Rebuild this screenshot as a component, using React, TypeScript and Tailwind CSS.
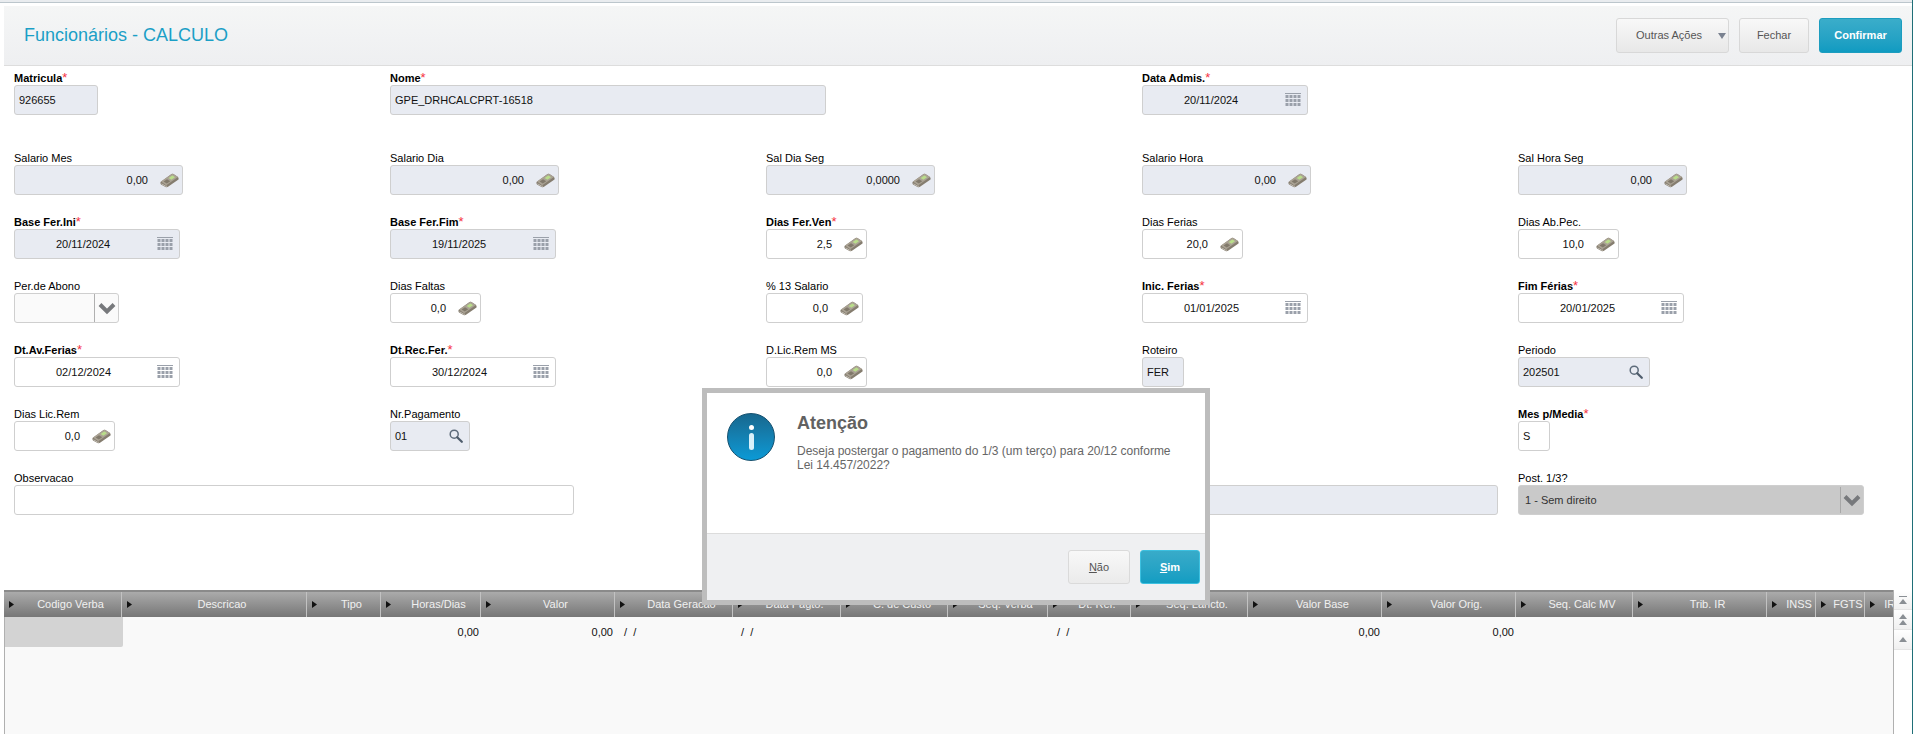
import type { ReactNode } from 'react';

function MoneyIcon() {
  return (
    <svg width="19" height="15" viewBox="0 0 19 15" className="shrink-0">
      <path d="M0.5 9 L11.5 1 Q12.5 0.4 13.5 1 L18 4 Q19 5 18.5 6.5 L8 13.8 Q7 14.6 5.5 14 L1 11.5 Q0.2 10.5 0.5 9 Z" fill="#857d6f" />
      <path d="M1 8.6 L11.8 1 Q12.6 0.6 13.4 1.1 L18 4 L7 11.8 Q6.2 12.2 5.4 11.8 Z" fill="#aaa294" />
      <path d="M8.6 5 L11.8 2.8 Q12.4 2.4 13 2.8 L15 4.2 L11.4 6.7 Z" fill="#b9dd8a" />
      <path d="M3.6 8.4 L7 6.2 L10.2 8.2 L6.8 10.5 Z" fill="#81796b" />
      <path d="M1.5 10.8 L5.8 13.2 L7 13.2" fill="none" stroke="#d2cec4" strokeWidth="0.8" />
    </svg>
  );
}

function CalendarIcon() {
  const cells = [0, 1, 2, 3];
  return (
    <svg width="16" height="14" viewBox="0 0 16 14" className="shrink-0" fill="#9aa0aa">
      <rect x="0" y="0" width="16" height="1" />
      {[2, 6, 10].map(y =>
        cells.map(c => <rect key={`${y}-${c}`} x={c * 4 + 0.5} y={y} width="3" height="3" />)
      )}
    </svg>
  );
}

function SearchIcon() {
  return (
    <svg width="14" height="14" viewBox="0 0 14 14" fill="none" className="shrink-0">
      <circle cx="5.2" cy="5.2" r="4" stroke="#5d6b7a" strokeWidth="1.5" />
      <path d="M8.2 8.2 L12.8 12.8" stroke="#4e5c6b" strokeWidth="2.2" strokeLinecap="round" />
    </svg>
  );
}

function ChevronIcon() {
  return (
    <svg width="18" height="13" viewBox="0 0 18 13" fill="none">
      <path d="M2 2.5 L9 9.5 L16 2.5" stroke="#77797c" strokeWidth="4" />
    </svg>
  );
}

function Field({ label, required, box, children }: { label: string; required?: boolean; box: string; children: ReactNode }) {
  return (
    <div className="flex flex-col">
      <div className={`h-[15px] text-[11px] leading-[17px] whitespace-nowrap text-black ${required ? 'font-bold' : ''}`}>
        {label}
        {required && <span className="text-[13px] leading-[13px] font-normal text-[#f5323f]">*</span>}
      </div>
      <div className={`flex h-[30px] items-center rounded-[3px] border border-[#cfcfcf] text-[11px] text-[#111] ${box}`}>
        {children}
      </div>
    </div>
  );
}

const locked = 'bg-[#e8ebf2]';
const free = 'bg-white';

function Money({ label, value, w, bg, required }: { label: string; value: string; w: string; bg: string; required?: boolean }) {
  return (
    <Field label={label} required={required} box={`${w} ${bg} pr-[3px]`}>
      <span className="flex-1 pr-[12px] text-right">{value}</span>
      <MoneyIcon />
    </Field>
  );
}

function DateField({ label, value, bg, required }: { label: string; value: string; bg: string; required?: boolean }) {
  return (
    <Field label={label} required={required} box={`w-[166px] ${bg} pr-[6px]`}>
      <span className="flex-1 pl-[41px]">{value}</span>
      <CalendarIcon />
    </Field>
  );
}

function Lookup({ label, value, w }: { label: string; value: string; w: string }) {
  return (
    <Field label={label} box={`${w} ${locked} pl-[4px] pr-[6px]`}>
      <span className="flex-1">{value}</span>
      <SearchIcon />
    </Field>
  );
}

function Text({ label, value, w, bg, required }: { label: string; value?: string; w: string; bg: string; required?: boolean }) {
  return (
    <Field label={label} required={required} box={`${w} ${bg} pl-[4px]`}>
      {value}
    </Field>
  );
}

const rowClass = 'grid h-[45px] grid-cols-[376px_376px_376px_376px_1fr]';

function Form() {
  return (
    <div className="flex flex-col gap-[19px] pl-[10px] pt-[4px]">
      <div className={`${rowClass} mb-[16px]`}>
        <Text label="Matricula" required value="926655" w="w-[84px]" bg={locked} />
        <Text label="Nome" required value="GPE_DRHCALCPRT-16518" w="w-[436px]" bg={locked} />
        <div className="col-start-4">
          <DateField label="Data Admis." required value="20/11/2024" bg={locked} />
        </div>
      </div>

      <div className={rowClass}>
        <Money label="Salario Mes" value="0,00" w="w-[169px]" bg={locked} />
        <Money label="Salario Dia" value="0,00" w="w-[169px]" bg={locked} />
        <Money label="Sal Dia Seg" value="0,0000" w="w-[169px]" bg={locked} />
        <Money label="Salario Hora" value="0,00" w="w-[169px]" bg={locked} />
        <Money label="Sal Hora Seg" value="0,00" w="w-[169px]" bg={locked} />
      </div>

      <div className={rowClass}>
        <DateField label="Base Fer.Ini" required value="20/11/2024" bg={locked} />
        <DateField label="Base Fer.Fim" required value="19/11/2025" bg={locked} />
        <Money label="Dias Fer.Ven" required value="2,5" w="w-[101px]" bg={free} />
        <Money label="Dias Ferias" value="20,0" w="w-[101px]" bg={free} />
        <Money label="Dias Ab.Pec." value="10,0" w="w-[101px]" bg={free} />
      </div>

      <div className={rowClass}>
        <Field label="Per.de Abono" box="w-[105px] border-[#8e8e8e] bg-[#fafafa]">
          <span className="flex-1" />
          <span className="flex h-full w-[24px] items-center justify-center border-l border-[#b0b0b0]">
            <ChevronIcon />
          </span>
        </Field>
        <Money label="Dias Faltas" value="0,0" w="w-[91px]" bg={free} />
        <Money label="% 13 Salario" value="0,0" w="w-[97px]" bg={free} />
        <DateField label="Inic. Ferias" required value="01/01/2025" bg={free} />
        <DateField label="Fim Férias" required value="20/01/2025" bg={free} />
      </div>

      <div className={rowClass}>
        <DateField label="Dt.Av.Ferias" required value="02/12/2024" bg={free} />
        <DateField label="Dt.Rec.Fer." required value="30/12/2024" bg={free} />
        <Money label="D.Lic.Rem MS" value="0,0" w="w-[101px]" bg={free} />
        <Text label="Roteiro" value="FER" w="w-[42px]" bg={locked} />
        <Lookup label="Periodo" value="202501" w="w-[132px]" />
      </div>

      <div className={rowClass}>
        <Money label="Dias Lic.Rem" value="0,0" w="w-[101px]" bg={free} />
        <Lookup label="Nr.Pagamento" value="01" w="w-[80px]" />
        <div className="col-start-5">
          <Text label="Mes p/Media" required value="S" w="w-[32px]" bg={free} />
        </div>
      </div>

      <div className={rowClass}>
        <div className="col-span-2">
          <Text label="Observacao" w="w-[560px]" bg={free} />
        </div>
        <div className="col-span-2">
          <Text label="" w="w-[732px]" bg={locked} />
        </div>
        <Field label="Post. 1/3?" box="w-[346px] border-[#8e8e8e] bg-[#c9c9c9]">
          <span className="flex-1 pl-[6px] text-[#333]">1 - Sem direito</span>
          <span className="flex h-[26px] w-[23px] items-center justify-center border-l border-[#a8a8a8]">
            <ChevronIcon />
          </span>
        </Field>
      </div>
    </div>
  );
}

const columns = [
  'Codigo Verba', 'Descricao', 'Tipo', 'Horas/Dias', 'Valor', 'Data Geracao', 'Data Pagto.', 'C. de Custo', 'Seq. Verba',
  'Dt. Ref.', 'Seq. Lancto.', 'Valor Base', 'Valor Orig.', 'Seq. Calc MV', 'Trib. IR', 'INSS', 'FGTS', 'IRRF',
];

const gridCols = 'grid-cols-[118px_185px_74px_100px_134px_118px_108px_107px_100px_83px_117px_134px_134px_117px_134px_49px_49px_49px]';

function ScrollButton({ count, line }: { count: number; line?: boolean }) {
  return (
    <div className="flex h-[20px] flex-col items-center justify-center gap-[1px] border-b border-[#e4e4e4] bg-gradient-to-b from-white to-[#f0f0f0]">
      {line && <div className="mb-[1px] h-[1px] w-[8px] bg-[#8a8f94]" />}
      {Array.from({ length: count }).map((_, i) => (
        <svg key={i} width="8" height="5" viewBox="0 0 8 5">
          <path d="M4 0 L8 5 L0 5 Z" fill="#8a8f94" />
        </svg>
      ))}
    </div>
  );
}

const slashes = '/  /';

function Table() {
  return (
    <div className="mt-[75px] flex h-[144px]">
      <div className="w-[1889px] overflow-hidden">
        <div className={`grid h-[27px] border-t-2 border-[#8a8a8a] bg-gradient-to-b from-[#ababab] to-[#777777] ${gridCols}`}>
          {columns.map(c => (
            <div key={c} className="flex items-center overflow-hidden border-r border-[#c2c2c2] pl-[5px]">
              <svg width="5" height="7" viewBox="0 0 5 7" className="mr-[6px] shrink-0">
                <path d="M0 0 L5 3.5 L0 7 Z" fill="#111" />
              </svg>
              <span className="flex-1 whitespace-nowrap text-center text-[11px] text-[#f0f0f0]">{c}</span>
            </div>
          ))}
        </div>
        <div className="h-[117px] border-l border-[#b0b0b0] bg-[#f9f9f9]">
          <div className={`grid h-[30px] items-center text-[11px] text-[#111] ${gridCols}`}>
            <div className="h-full rounded-br-[2px] bg-[#d3d3d3]" />
            <div />
            <div />
            <div className="pr-[3px] text-right">0,00</div>
            <div className="pr-[3px] text-right">0,00</div>
            <div className="pl-[8px] whitespace-pre">{slashes}</div>
            <div className="pl-[7px] whitespace-pre">{slashes}</div>
            <div />
            <div />
            <div className="pl-[8px] whitespace-pre">{slashes}</div>
            <div />
            <div className="pr-[3px] text-right">0,00</div>
            <div className="pr-[3px] text-right">0,00</div>
          </div>
        </div>
      </div>
      <div className="w-[19px] border-l border-[#b0b0b0] bg-white">
        <ScrollButton count={1} line />
        <ScrollButton count={2} />
        <ScrollButton count={1} />
      </div>
    </div>
  );
}

function Dialog() {
  return (
    <div className="absolute left-[702px] top-[388px] flex h-[217px] w-[508px] flex-col border-[5px] border-[#bdbdbd] bg-white">
      <div className="flex flex-1 gap-[22px] pl-[20px] pt-[20px]">
        <div className="relative h-[48px] w-[48px] shrink-0 rounded-full border border-[#14506f] bg-gradient-to-b from-[#17688f] to-[#0a9ad6]">
          <div className="absolute left-[20.5px] top-[11px] h-[5px] w-[5px] rounded-full bg-white" />
          <div className="absolute left-[20.5px] top-[19px] h-[17px] w-[5px] rounded-full bg-[#d8f0fa]" />
        </div>
        <div className="w-[385px]">
          <div className="text-[18px] leading-[20px] font-bold text-[#616161]">Atenção</div>
          <p className="mt-[11px] text-[12px] leading-[14px] text-[#666]">
            Deseja postergar o pagamento do 1/3 (um terço) para 20/12 conforme Lei 14.457/2022?
          </p>
        </div>
      </div>
      <div className="flex h-[67px] items-center justify-end gap-[10px] border-t border-[#dcdcdc] bg-[#eff0f2] pr-[5px]">
        <button className="h-[34px] w-[62px] rounded-[3px] border border-[#dadada] bg-gradient-to-b from-[#f8f8f8] to-[#ebebeb] text-[11px] text-[#555]">
          <u>N</u>ão
        </button>
        <button className="h-[34px] w-[60px] rounded-[3px] border border-[#3cc0e0] bg-gradient-to-b from-[#38abc9] to-[#119dc2] text-[11px] font-bold text-white">
          <u>S</u>im
        </button>
      </div>
    </div>
  );
}

export default function App() {
  return (
    <div className="relative h-[734px] w-[1915px] overflow-hidden bg-white font-['Liberation_Sans',Arial,sans-serif]">
      <div className="h-[734px] w-[1913px] border-r border-[#1f6f78] pl-[4px]">
        <div className="-ml-[4px] h-[6px] bg-white">
          <div className="h-[3px] border-b border-[#bcc6cc] bg-[#e9ecef]" />
        </div>
        <div className="flex h-[60px] items-center justify-between border-b border-[#dddddd] bg-gradient-to-b from-[#f5f6f6] to-[#eeeff1] pl-[20px] pr-[10px]">
          <h1 className="text-[18px] text-[#1b9fc6]">Funcionários - CALCULO</h1>
          <div className="flex gap-[10px] text-[11px]">
            <button className="flex h-[35px] w-[113px] items-center rounded-[3px] border border-[#d8d8d8] bg-gradient-to-b from-[#f8f8f8] to-[#e8e8e8] pl-[19px] text-[#555]">
              <span className="flex-1 text-left">Outras Ações</span>
              <svg width="8" height="6" viewBox="0 0 8 6" className="mr-[2px]">
                <path d="M0 0 L8 0 L4 6 Z" fill="#7a8290" />
              </svg>
            </button>
            <button className="h-[35px] w-[70px] rounded-[3px] border border-[#d8d8d8] bg-gradient-to-b from-[#f8f8f8] to-[#e8e8e8] text-[#555]">
              Fechar
            </button>
            <button className="h-[35px] w-[83px] rounded-[3px] border border-[#1c9dbf] bg-gradient-to-b from-[#3aadca] to-[#0f9bc1] font-bold text-white">
              Confirmar
            </button>
          </div>
        </div>
        <Form />
        <Table />
      </div>
      <Dialog />
    </div>
  );
}
